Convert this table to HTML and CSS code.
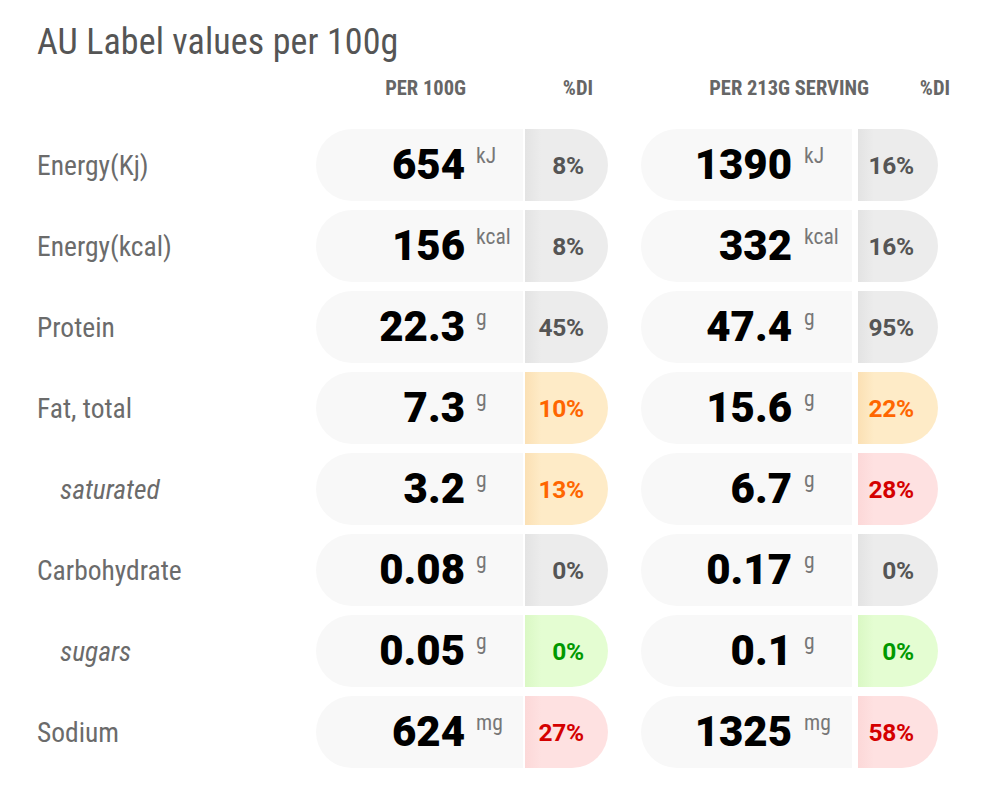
FILE: index.html
```html
<!DOCTYPE html>
<html lang="en">
<head>
<meta charset="utf-8">
<title>AU Label values per 100g</title>
<link rel="stylesheet" href="styles.css">
</head>
<body>
<div class="page">
  <h1 class="title">AU Label values per 100g</h1>
  <div class="head">
    <div class="h-spacer"></div>
    <div class="h h1">PER 100G</div>
    <div class="h h2">%DI</div>
    <div class="h h3">PER 213G SERVING</div>
    <div class="h h4">%DI</div>
  </div>

  <div class="row">
    <div class="label">Energy(Kj)</div>
    <div class="pill p1"><div class="num"><span class="val">654</span><span class="unit">kJ</span></div><div class="di grey">8%</div></div>
    <div class="pill p2"><div class="num"><span class="val">1390</span><span class="unit">kJ</span></div><div class="di grey">16%</div></div>
  </div>
  <div class="row">
    <div class="label">Energy(kcal)</div>
    <div class="pill p1"><div class="num"><span class="val">156</span><span class="unit">kcal</span></div><div class="di grey">8%</div></div>
    <div class="pill p2"><div class="num"><span class="val">332</span><span class="unit">kcal</span></div><div class="di grey">16%</div></div>
  </div>
  <div class="row">
    <div class="label">Protein</div>
    <div class="pill p1"><div class="num"><span class="val">22.3</span><span class="unit">g</span></div><div class="di grey">45%</div></div>
    <div class="pill p2"><div class="num"><span class="val">47.4</span><span class="unit">g</span></div><div class="di grey">95%</div></div>
  </div>
  <div class="row">
    <div class="label">Fat, total</div>
    <div class="pill p1"><div class="num"><span class="val">7.3</span><span class="unit">g</span></div><div class="di orange">10%</div></div>
    <div class="pill p2"><div class="num"><span class="val">15.6</span><span class="unit">g</span></div><div class="di orange">22%</div></div>
  </div>
  <div class="row">
    <div class="label sub">saturated</div>
    <div class="pill p1"><div class="num"><span class="val">3.2</span><span class="unit">g</span></div><div class="di orange">13%</div></div>
    <div class="pill p2"><div class="num"><span class="val">6.7</span><span class="unit">g</span></div><div class="di red">28%</div></div>
  </div>
  <div class="row">
    <div class="label">Carbohydrate</div>
    <div class="pill p1"><div class="num"><span class="val">0.08</span><span class="unit">g</span></div><div class="di grey">0%</div></div>
    <div class="pill p2"><div class="num"><span class="val">0.17</span><span class="unit">g</span></div><div class="di grey">0%</div></div>
  </div>
  <div class="row">
    <div class="label sub">sugars</div>
    <div class="pill p1"><div class="num"><span class="val">0.05</span><span class="unit">g</span></div><div class="di green">0%</div></div>
    <div class="pill p2"><div class="num"><span class="val">0.1</span><span class="unit">g</span></div><div class="di green">0%</div></div>
  </div>
  <div class="row">
    <div class="label">Sodium</div>
    <div class="pill p1"><div class="num"><span class="val">624</span><span class="unit">mg</span></div><div class="di red">27%</div></div>
    <div class="pill p2"><div class="num"><span class="val">1325</span><span class="unit">mg</span></div><div class="di red">58%</div></div>
  </div>
</div>
</body>
</html>
```

FILE: styles.css
```css
html, body {
  margin: 0;
  padding: 0;
  background: #ffffff;
}

.page {
  padding: 22px 0 0 37px;
  font-family: "Roboto Condensed", "Roboto", "Liberation Sans Narrow", sans-serif;
  font-stretch: condensed;
}

.title {
  margin: 0;
  font-size: 36px;
  line-height: 40px;
  font-weight: 400;
  color: #555555;
  letter-spacing: 0.1px;
}

.head {
  display: flex;
  margin-top: 16px;
  height: 20px;
  margin-bottom: 31px;
}

.h-spacer {
  width: 279px;
}

.h {
  text-align: right;
  font-size: 20.5px;
  line-height: 20px;
  font-weight: 700;
  color: #666666;
  white-space: nowrap;
}

.h1 { width: 150px; }
.h2 { width: 127px; }
.h3 { width: 276px; }
.h4 { width: 81px; }

.row {
  display: flex;
  align-items: center;
  height: 72px;
  margin-bottom: 9px;
}

.label {
  width: 279px;
  font-size: 27.5px;
  color: #6b6b6b;
}

.label.sub {
  font-style: italic;
  padding-left: 23px;
  box-sizing: border-box;
}

.pill {
  display: flex;
  height: 72px;
}

.p1 { gap: 2px; }
.p2 { gap: 6px; margin-left: 33px; }

.num {
  display: flex;
  justify-content: flex-end;
  align-items: center;
  background: #f8f8f8;
  border-radius: 36px 0 0 36px;
}

.p1 .num { width: 207px; }
.p2 .num { width: 211px; }

.val {
  font-family: "Roboto", sans-serif;
  font-stretch: normal;
  font-weight: 900;
  font-size: 42px;
  line-height: 42px;
  color: #000000;
}

.unit {
  align-self: flex-start;
  margin-top: 15px;
  width: 58px;
  padding-left: 11px;
  box-sizing: border-box;
  font-size: 21.5px;
  line-height: 24px;
  color: #777777;
}

.p2 .unit { width: 60px; padding-left: 12px; }

.di {
  display: flex;
  align-items: center;
  justify-content: flex-end;
  padding-right: 24px;
  box-sizing: border-box;
  border-radius: 0 36px 36px 0;
  font-family: "Roboto", sans-serif;
  font-stretch: normal;
  font-size: 24.5px;
  font-weight: 700;
  letter-spacing: -0.2px;
}

.p1 .di { width: 83px; }
.p2 .di { width: 80px; }

.di.grey {
  color: #555555;
  background: linear-gradient(to right, #e3e3e3 0, #ececec 16px, #ececec 100%);
}

.di.orange {
  color: #ff6600;
  background: linear-gradient(to right, #fbe0b4 0, #feebc7 16px, #feebc7 100%);
}

.di.red {
  color: #d40000;
  background: linear-gradient(to right, #fcd8d8 0, #fee1e1 16px, #fee1e1 100%);
}

.di.green {
  color: #009900;
  background: linear-gradient(to right, #daf8c4 0, #e4fdd2 16px, #e4fdd2 100%);
}
```
